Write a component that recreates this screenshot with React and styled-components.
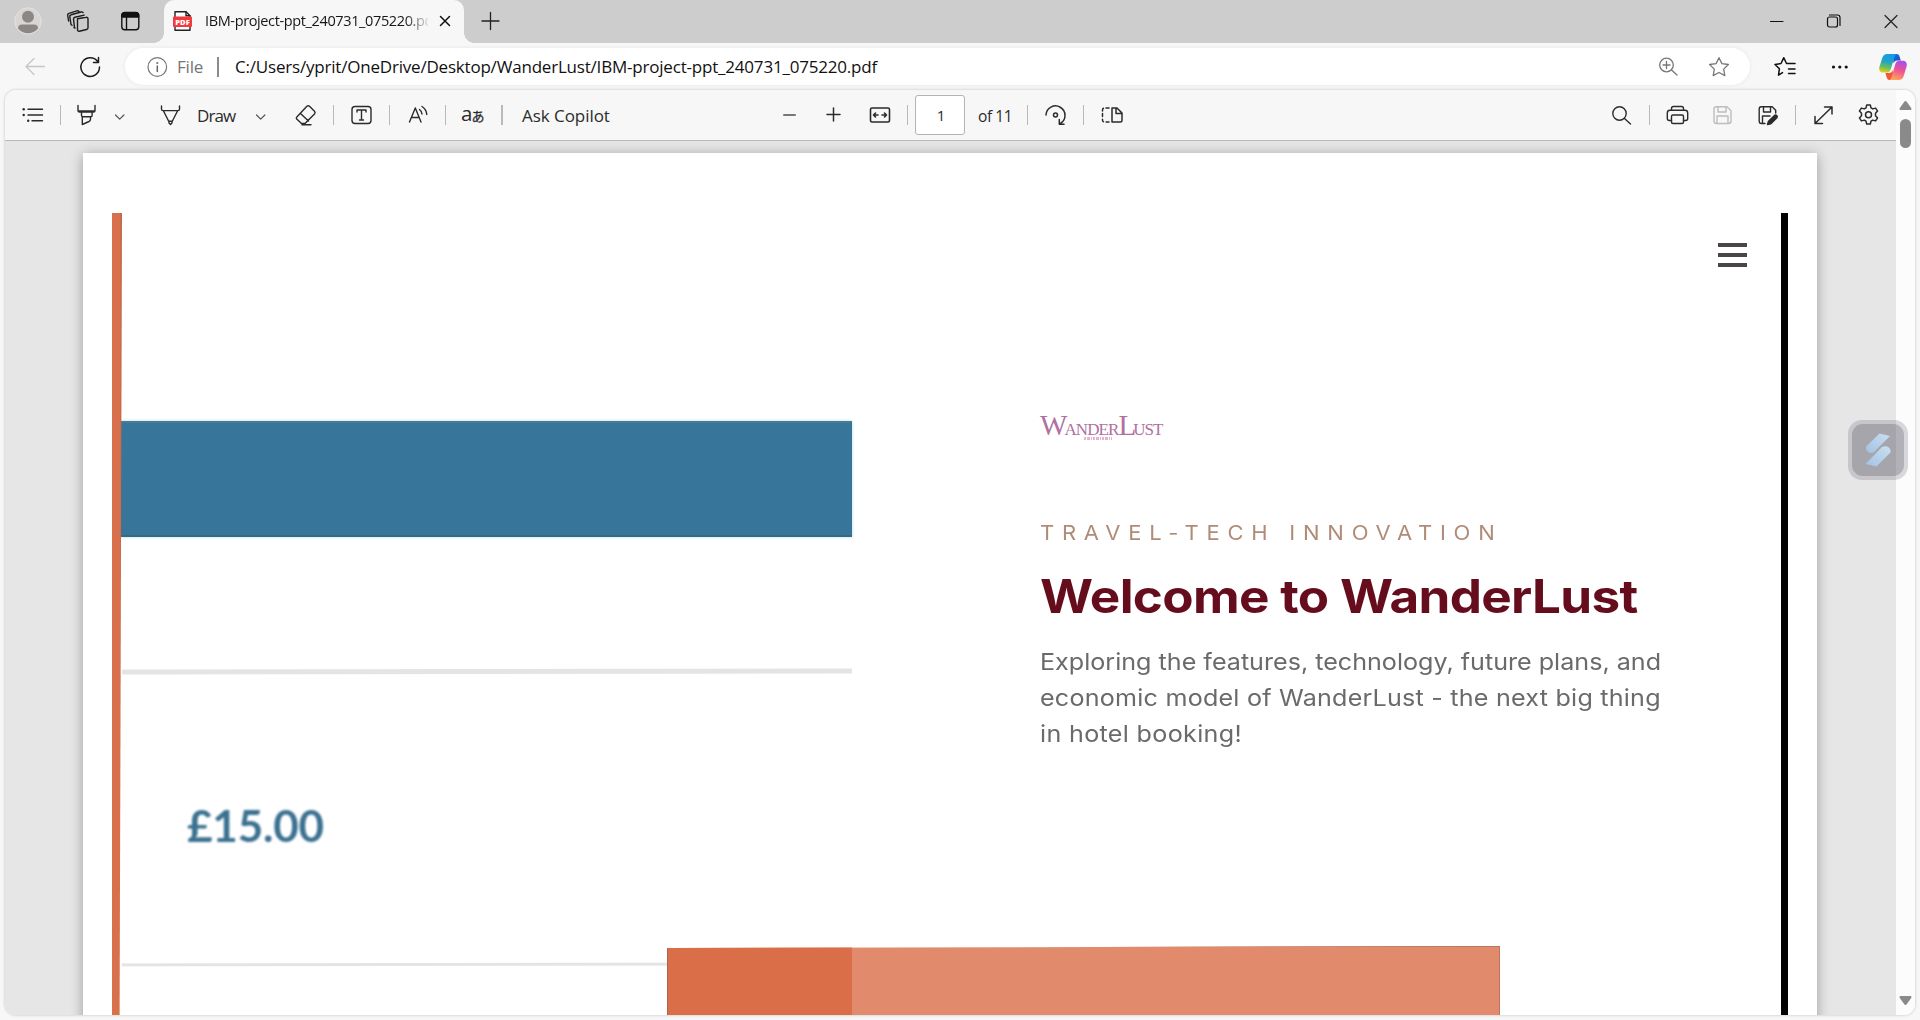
import React from "react";
import styled, { createGlobalStyle } from "styled-components";

const ui = `"Open Sans", "Noto Sans", sans-serif`;

const GlobalStyle = createGlobalStyle`
  * { box-sizing: border-box; }
  html, body { margin: 0; padding: 0; height: 100%; overflow: hidden; }
  body { background: #f7f7f7; font-family: ${ui}; color: #1b1b1b; }
`;

const Window = styled.div`
  position: relative;
  width: 1920px;
  height: 1020px;
  display: flex;
  flex-direction: column;
  background: #f7f7f7;
  overflow: hidden;
`;

/* ---------- shared pieces ---------- */
const Glyph = styled.svg`
  display: block;
  flex: none;
  margin-left: ${(p) => p.$gap || 0}px;
  width: ${(p) => p.$w || 24}px;
  height: ${(p) => p.$h || 24}px;
  fill: none;
  stroke: ${(p) => p.$color || "#2b2b2b"};
  stroke-width: ${(p) => p.$stroke || 1.4};
  stroke-linecap: round;
  stroke-linejoin: round;
  overflow: visible;
`;

function Icon({ gap, w = 24, h = 24, color, stroke, children }) {
  return (
    <Glyph $gap={gap} $w={w} $h={h} $color={color} $stroke={stroke} viewBox={`0 0 ${w} ${h}`}>
      {children}
    </Glyph>
  );
}

const Label = styled.span`
  flex: none;
  margin-left: ${(p) => p.$gap || 0}px;
  padding-top: ${(p) => p.$drop || 0}px;
  width: ${(p) => p.$w}px;
  font-size: ${(p) => p.$size || 16}px;
  letter-spacing: ${(p) => p.$track || 0}px;
  color: ${(p) => p.$color || "#2b2b2b"};
  line-height: 24px;
  white-space: nowrap;
`;

const Divider = styled.span`
  flex: none;
  width: ${(p) => p.$w || 1}px;
  height: 20px;
  margin-left: ${(p) => p.$gap}px;
  background: ${(p) => p.$color || "#b9b9b9"};
`;

/* ---------- title bar ---------- */
const TitleBar = styled.header`
  flex: none;
  height: 43px;
  padding-bottom: 2px;
  display: flex;
  align-items: center;
  background: #cdcdcd;
`;

const Tab = styled.div`
  position: relative;
  width: 300px;
  height: 43px;
  margin: 0 0 -2px 22px;
  padding: 0 0 2px 9px;
  display: flex;
  align-items: center;
  background: #f7f7f7;
  border-radius: 10px 10px 0 0;
  &::before, &::after {
    content: "";
    position: absolute;
    bottom: 0;
    width: 10px;
    height: 10px;
  }
  &::before { left: -10px; background: radial-gradient(circle at 0 0, transparent 9.5px, #f7f7f7 10px); }
  &::after { right: -10px; background: radial-gradient(circle at 100% 0, transparent 9.5px, #f7f7f7 10px); }
`;

const TabTitle = styled.span`
  width: 223px;
  margin-left: 12px;
  overflow: hidden;
  white-space: nowrap;
  font-size: 14.5px;
  line-height: 22px;
  letter-spacing: -0.37px;
  color: #161616;
  mask-image: linear-gradient(90deg, #000 200px, transparent 226px);
`;

/* ---------- address row ---------- */
const AddressRow = styled.div`
  flex: none;
  height: 47px;
  display: flex;
  align-items: center;
`;

const AddressBox = styled.div`
  width: 1625px;
  height: 37px;
  margin-left: 23px;
  display: flex;
  align-items: center;
  background: #fff;
  border-radius: 19px;
  box-shadow: 0 0 4px rgba(0, 0, 0, 0.07);
`;

/* ---------- PDF viewer ---------- */
const Viewer = styled.main`
  flex: none;
  width: 1910px;
  height: 925px;
  margin-left: 5px;
  display: flex;
  border-radius: 11px;
  overflow: hidden;
  background: #fcfcfc;
  box-shadow: 0 0 3px rgba(0, 0, 0, 0.24);
`;

const Content = styled.div`
  width: 1891px;
  display: flex;
  flex-direction: column;
`;

const PdfToolbar = styled.div`
  flex: none;
  height: 51px;
  display: flex;
  align-items: center;
  background: #f7f7f7;
  border-bottom: 1px solid #b9b9b9;
`;

const PageInput = styled.div`
  flex: none;
  width: 50px;
  height: 40px;
  margin-left: 7px;
  padding-left: 2px;
  display: flex;
  align-items: center;
  justify-content: center;
  background: #fff;
  border: 1px solid #b4b4b4;
  border-radius: 3px;
  font-size: 15px;
  color: #2b2b2b;
`;

const Canvas = styled.div`
  flex: 1;
  min-height: 0;
  padding: 12px 79px 0 78px;
  background: #e6e6e6;
  overflow: hidden;
`;

const Page = styled.div`
  height: 900px;
  padding: 60px 29px 0;
  background: #fff;
  box-shadow: 0 2px 12px rgba(0, 0, 0, 0.32);
`;

const ScrollTrack = styled.div`
  width: 19px;
  display: flex;
  flex-direction: column;
  align-items: center;
  justify-content: space-between;
  padding: 11px 0 10px;
  background: #fcfcfc;
`;

const ScrollTop = styled.div`
  display: flex;
  flex-direction: column;
  align-items: center;
  gap: 9px;
`;

const Thumb = styled.div`
  width: 11px;
  height: 29px;
  border-radius: 6px;
  background: #8a8a8a;
`;

/* ---------- slide ---------- */
const Slide = styled.section`
  position: relative;
  height: 840px;
  display: flex;
`;

const AccentBar = styled.div`
  width: 10px;
  background: linear-gradient(90deg, #d9704c 75%, #b9644c);
  clip-path: polygon(0 0, 10px 0, 7.5px 100%, 0 100%);
`;

const PriceColumn = styled.div`
  width: 730px;
  padding-top: 208px;
  display: flex;
  flex-direction: column;
`;

const BlueBand = styled.div`
  height: 116px;
  margin-left: -1px;
  background: #38759b;
  border-top: 2px solid #477b94;
  border-bottom: 2px solid #39687f;
  box-shadow: 0 0 3px #a9dce3;
`;

const Rule = styled.div`
  height: ${(p) => p.$h}px;
  width: ${(p) => p.$w}px;
  margin-top: ${(p) => p.$gap}px;
  background: #e4e4e4;
  filter: blur(0.6px);
  transform: rotate(-0.08deg);
`;

const Price = styled.div`
  height: 60px;
  margin: 121px 0 0 65px;
  font: 700 44px/60px Lato, sans-serif;
  color: #3b7190;
  white-space: nowrap;
  letter-spacing: -0.2px;
  filter: blur(0.8px);
`;

const CoralBlock = styled.div`
  position: absolute;
  left: 555px;
  top: 733px;
  width: 833px;
  height: 120px;
  display: flex;
  background: #e18b6c;
  border: 1.5px solid #b9765c;
  border-left-color: #a8664c;
  clip-path: polygon(0 2px, 100% 0, 100% 100%, 0 100%);
`;

const CoralDark = styled.div`
  width: 184px;
  background: #d96e49;
`;

const Copy = styled.div`
  flex: 1;
  padding: 192px 0 0 188px;
  display: flex;
  flex-direction: column;
  font-family: Inter, sans-serif;
`;

const Logo = styled.div`
  height: 44px;
  display: flex;
  align-items: baseline;
  font: 17px/40px "Liberation Serif", serif;
  letter-spacing: -0.9px;
  color: #b070a0;
  white-space: nowrap;
`;

const LogoCap = styled.span`
  font-size: 29px;
  letter-spacing: -3px;
`;

const LogoMark = styled.svg`
  display: block;
  margin: -13px 0 4px 44px;
  width: 28px;
  height: 5px;
`;

const Eyebrow = styled.div`
  margin-top: 74px;
  height: 28px;
  font-size: 20px;
  line-height: 28px;
  font-weight: 400;
  letter-spacing: 7.05px;
  color: #b08b78;
  white-space: nowrap;
  transform: scaleX(1.1);
  transform-origin: 0 50%;
`;

const Heading = styled.h1`
  margin: 19px 0 0;
  height: 60px;
  font-size: 46px;
  line-height: 60px;
  font-weight: 700;
  letter-spacing: -0.6px;
  color: #650d1d;
  white-space: nowrap;
  transform: scaleX(1.112);
  transform-origin: 0 50%;
`;

const Body = styled.p`
  margin: 18px 0 0;
  font-size: 23px;
  line-height: 36px;
  color: #6a6a6a;
  transform: scaleX(1.092);
  transform-origin: 0 50%;
`;

const Line = styled.span`
  display: block;
  white-space: nowrap;
  letter-spacing: ${(p) => p.$track}px;
`;

const MenuBars = styled.div`
  width: 29px;
  height: 24px;
  margin: 30px 34px 0 0;
  display: flex;
  flex-direction: column;
  justify-content: space-between;
`;

const Bar = styled.span`
  height: 4px;
  background: #4a4547;
  filter: blur(0.4px);
`;

const BlackEdge = styled.div`
  width: 7.5px;
  background: #000;
`;

const Widget = styled.div`
  position: absolute;
  left: 1848px;
  top: 420px;
  width: 60px;
  height: 60px;
  padding: 4px;
  border-radius: 14px;
  background: rgba(75, 75, 95, 0.2);
`;

const WidgetFace = styled.div`
  width: 52px;
  height: 52px;
  display: flex;
  align-items: center;
  justify-content: center;
  border-radius: 11px;
  background: rgba(75, 75, 85, 0.27);
`;

const starPath = "M12 2.7l2.9 5.9 6.5.9-4.7 4.6 1.1 6.5-5.8-3.1-5.8 3.1 1.1-6.5L2.6 9.5l6.5-.9z";

function PdfFavicon() {
  return (
    <Icon w={20} h={22} color="#222" stroke="1.4">
      <path d="M2 8V1.7h11l4 4V8M2 16v4.3h15V16" fill="#fff" />
      <path d="M13 1.7v4h4" />
      <rect x="0" y="6.5" width="19" height="10.5" rx="1" fill="#f4383d" stroke="none" />
      <text x="9.5" y="14.6" textAnchor="middle" fontFamily="Open Sans, sans-serif" fontSize="7.6" fontWeight="800" fill="#fff" stroke="none">PDF</text>
    </Icon>
  );
}

function Copilot() {
  return (
    <Icon gap={27} w={28} h={28} stroke="0">
      <defs>
        <linearGradient id="cpA" x1="0.4" y1="0" x2="0.2" y2="1">
          <stop offset="0" stopColor="#1599ea" /><stop offset=".4" stopColor="#22a5c0" />
          <stop offset=".7" stopColor="#6cbf5a" /><stop offset="1" stopColor="#f4cf13" />
        </linearGradient>
        <linearGradient id="cpB" x1="0.7" y1="0" x2="0.4" y2="1">
          <stop offset="0" stopColor="#a94df0" /><stop offset=".5" stopColor="#ee5591" />
          <stop offset="1" stopColor="#ffa45c" />
        </linearGradient>
        <linearGradient id="cpC" x1="0" y1="0" x2="1" y2="1">
          <stop offset="0" stopColor="#1a72e4" /><stop offset="1" stopColor="#2146bd" />
        </linearGradient>
      </defs>
      <path d="M13 1h4.5c1.6 0 2.5.8 3 2.4l1.3 4.2h-3.500c-2.200 0-3 1-3.600 3z" fill="url(#cpC)" />
      <path d="M15 27h-4.600c-1.400 0-2.200-.8-2.700-2.400L6.400 20H10c2 0 2.900-1 3.500-3z" fill="#ef5a36" />
      <path d="M8.400 1H18c-1.400.3-2 1.300-2.500 2.800L11.800 16c-.9 2.600-2 3.600-4.600 3.600H4.100C1 19.600-.4 17 .4 14L3.300 5C4.200 2.300 5.600 1 8.400 1z" fill="url(#cpA)" />
      <path d="M19.600 27H10c1.400-.3 2-1.300 2.500-2.800l3.700-12.800c.9-2.600 2-3.600 4.600-3.600h3.100c3.100 0 4.500 2.600 3.700 5.600L24.700 23c-.9 2.700-2.300 4-5.100 4z" fill="url(#cpB)" />
    </Icon>
  );
}

function Chevron({ gap }) {
  return <Icon gap={gap} w={12} h={24} color="#555" stroke="1.2"><path d="M1.500 12l4.200 4.200 4.200-4.200" /></Icon>;
}

export default function App() {
  return (
    <Window>
      <GlobalStyle />
      <TitleBar>
        <Icon gap={14} w={28} h={28} stroke="0">
          <circle cx="14" cy="14" r="13.2" fill="#d8d6d3" stroke="#e4e2df" strokeWidth="1" />
          <circle cx="14" cy="9.8" r="6" fill="#8b8784" />
          <path d="M4 21.500c0-3 1.500-4 4-4h12c2.500 0 4 1 4 4a13 13 0 0 1-20 0z" fill="#8b8784" />
        </Icon>
        <Icon gap={24} color="#1d1d1d">
          <path d="M11.500 9.800l8.500-1.500c1-.2 2 .4 2 1.500v9c0 .9-.5 1.500-1.400 1.700l-7.300 1.700c-1 .2-1.800-.4-1.800-1.400z" />
          <path d="M8.500 18.500l-1-8.300c-.1-1 .5-1.700 1.400-1.900l9.300-2.200M8 18.500l1 .5M5 15.500L3.800 7.700c-.2-1 .4-1.800 1.300-2l10-2.700c.9-.2 1.600 0 2 .6M5 15.500l1 .8M2.600 12L1.700 6.300c-.2-1 .3-1.700 1.200-2L11 1.900c.8-.2 1.600 0 2 .7" />
        </Icon>
        <Icon gap={28} color="#111">
          <rect x="3.800" y="3.700" width="17" height="17" rx="3" />
          <path d="M4 8V6.500a3 3 0 0 1 3-3h10.600a3 3 0 0 1 3 3V8z" fill="#111" />
          <path d="M8.500 8v12.500" />
        </Icon>
        <Tab>
          <PdfFavicon />
          <TabTitle>IBM-project-ppt_240731_075220.pdf</TabTitle>
          <Icon gap={10} w={14} h={14} color="#111" stroke="1.5"><path d="M2.500 2.500l9 9M11.500 2.500l-9 9" /></Icon>
        </Tab>
        <Icon gap={14} color="#222" stroke="1.3"><path d="M12.500 3.500v17M4 12h17" /></Icon>
        <Icon gap={1263} color="#111" stroke="1.1"><path d="M5.500 12.500h12.500" /></Icon>
        <Icon gap={32} color="#111" stroke="1.2">
          <rect x="6.500" y="8" width="10" height="10" rx="2" />
          <path d="M8.500 6h8c1.500 0 2.500 1 2.500 2.500v8" />
        </Icon>
        <Icon gap={34} color="#222" stroke="1.2"><path d="M6 6.500l12 12M18 6.500l-12 12" /></Icon>
      </TitleBar>

      <AddressRow>
        <Icon gap={23} color="#c6c6c6" stroke="1.3"><path d="M21.500 11.500H3M11 3.500l-8 8 8 8" /></Icon>
        <Icon gap={31} color="#1d1d1d" stroke="1.5">
          <path d="M19.700 6.600A9.300 9.300 0 1 0 21.500 12M20.500 2.500v5h-5" />
        </Icon>
        <AddressBox>
          <Icon gap={20} color="#767676" stroke="1.2">
            <circle cx="12.300" cy="12" r="9.300" />
            <path d="M12.300 11v5.500" stroke="#666" strokeWidth="1.5" />
            <circle cx="12.300" cy="8" r=".5" fill="#666" />
          </Icon>
          <Label $gap={8} $w={40} $size={17} $track={-0.2} $color="#757575">File</Label>
          <Divider $gap={0} $w={2} $color="#8b8b8b" />
          <Label $gap={16} $w={660} $size={17} $track={-0.2} $color="#111">C:/Users/yprit/OneDrive/Desktop/WanderLust/IBM-project-ppt_240731_075220.pdf</Label>
          <Icon gap={762} color="#777" stroke="1.3">
            <circle cx="9.500" cy="10" r="6.800" /><path d="M14.500 15l5.500 5M9.500 6.500v7M6 10h7" />
          </Icon>
          <Icon gap={26} color="#777" stroke="1.3"><path d={starPath} /></Icon>
        </AddressBox>
        <Icon gap={23} color="#111" stroke="1.5">
          <path d="M9.500 17.600l-4 2.600.9-6.500L2 9.500l6-1 2.800-5.800 2.700 5.800H22M15.500 14H22M15.500 18.500H22" />
        </Icon>
        <Icon gap={31} stroke="0" color="none">
          <g fill="#111"><circle cx="5.500" cy="12" r="1.600" /><circle cx="11.800" cy="12" r="1.600" /><circle cx="18.200" cy="12" r="1.600" /></g>
        </Icon>
        <Copilot />
      </AddressRow>

      <Viewer>
        <Content>
          <PdfToolbar>
            <Icon gap={15}>
              <path d="M8 6.200h14.500M8 12h14.500M12 17.700h10.500" />
              <g fill="#2b2b2b" stroke="none"><circle cx="3.700" cy="6.200" r="1.200" /><circle cx="3.700" cy="12" r="1.200" /><circle cx="8.200" cy="17.700" r="1.200" /></g>
            </Icon>
            <Divider $gap={16} />
            <Icon gap={14}>
              <path d="M3 2.500v5c0 1 .5 1.500 1.500 1.500h14c1 0 1.500-.5 1.500-1.500v-5M3 8h17M6.500 9v3.500c0 .8.500 1.300 1.300 1.300h8c.8 0 1.300-.5 1.300-1.300V9M7.300 14v7.500l6.700-3c1-.5 1.500-1.200 1.500-2.200V14" />
            </Icon>
            <Chevron gap={15} />
            <Icon gap={33}>
              <path d="M2.500 3v3c0 1 .5 1.600 1.500 1.600h15c1 0 1.500-.6 1.500-1.600V3M4.500 8l5.200 10.300h3.600L18.500 8M10 18.500V20l1.500 1.500L13 20v-1.500" />
            </Icon>
            <Label $gap={14} $w={40} $size={17} $track={-0.9} $drop={2}>Draw</Label>
            <Chevron gap={18} />
            <Icon gap={27}>
              <path d="M2.800 14L12.900 3.300c.8-.8 1.800-.8 2.600 0l5 5c.8.800.8 1.800 0 2.600L11 20.500H7.500L2.700 16c-.6-.7-.5-1.400.1-2zM6.500 10.500l8 7.500M8 21.700h9" />
            </Icon>
            <Divider $gap={15} />
            <Icon gap={16}>
              <rect x="2" y="3.500" width="19" height="17" rx="3" />
              <path d="M7 9V7h9v2M11.500 7v10M9.500 17h4" />
            </Icon>
            <Divider $gap={15} />
            <Icon gap={17}>
              <path d="M2.500 19L8.300 5l5.700 14M4.500 14.500h7.600M12.500 6.500c1.500 1 2.300 2.500 2.500 4.500M15 3.500c2.800 1.800 4.500 4.500 4.800 8" />
            </Icon>
            <Divider $gap={14} />
            <Icon gap={15} stroke="0">
              <text x="0" y="17.500" fontFamily="Open Sans, sans-serif" fontSize="20.500" fill="#2b2b2b" stroke="none">a</text>
              <text x="10.500" y="18" fontFamily="Noto Sans CJK JP, sans-serif" fontSize="13" fontWeight="400" fill="#2b2b2b" stroke="#2b2b2b" strokeWidth=".3">あ</text>
            </Icon>
            <Divider $gap={16} $w={2} />
            <Label $gap={19} $w={89} $size={17} $track={-0.05} $drop={2}>Ask Copilot</Label>
            <Icon gap={167} color="#777" stroke="2"><path d="M6 12h11" /></Icon>
            <Icon gap={19} stroke="1.5"><path d="M12.500 5v13M6 11.500h13" /></Icon>
            <Icon gap={23} stroke="1.6">
              <rect x="2.500" y="5" width="19" height="14" rx="1.500" />
              <path d="M5.500 12H10M7.500 10l-2 2 2 2M18.500 12H14M16.500 10l2 2-2 2" />
            </Icon>
            <Divider $gap={15} />
            <PageInput>1</PageInput>
            <Label $gap={13} $w={34} $size={15.5} $track={-0.4} $drop={1}>of 11</Label>
            <Divider $gap={15} />
            <Icon gap={16} stroke="1.5">
              <path d="M2 12a9.500 9.500 0 1 1 14.500 8.500M15.300 16.500v4.700H20" /><circle cx="11.500" cy="12" r="2" />
            </Icon>
            <Divider $gap={15} />
            <Icon gap={16} stroke="1.5">
              <path d="M12 5h5l5 5v7.500c0 1-.5 1.500-1.500 1.500H12zM16 5v5.500h6" />
              <path d="M9 5H4.500c-1 0-2 .5-2 2v10c0 1.500 1 2 2 2H9" strokeDasharray="3 2.600" />
            </Icon>
            <Icon gap={485}><circle cx="10.500" cy="10.500" r="6.700" /><path d="M15.500 15.500l6 5.500" /></Icon>
            <Divider $gap={16} />
            <Icon gap={15}>
              <path d="M6.500 7V5.500c0-1.200.7-2 2-2h8c1.300 0 2 .8 2 2V7M6.500 17.500H4.500c-1.500 0-2.200-.8-2.200-2V10c0-1.700 1-2.700 2.700-2.700h15c1.700 0 2.700 1 2.700 2.700v5.500c0 1.200-.7 2-2.200 2h-2" />
              <rect x="6.500" y="12" width="12" height="8.500" rx="1.500" />
            </Icon>
            <Icon gap={21} color="#bdbdbd">
              <path d="M6 3.700h11l4 4V18c0 1.500-1 2.500-2.500 2.500h-12c-1.500 0-2.500-1-2.500-2.500V6c0-1.400.8-2.300 2-2.300zM8 4v5h8V4M7 20v-7h11v7" />
            </Icon>
            <Icon gap={22}>
              <path d="M9 20.500H5.500c-1.400 0-2.300-1-2.300-2.300V6c0-1.400.8-2.300 2-2.300h11l3.500 3.500V10M7.500 4v5h7V4M6.500 20v-7H14" />
              <path d="M11.500 21.500l1-3.300 6-5.800c1.500-1.200 3.700.8 2.400 2.400l-6 5.900z" fill="#2b2b2b" />
            </Icon>
            <Divider $gap={15} />
            <Icon gap={15} stroke="1.5"><path d="M4 20.500L21 4M13.500 4H21v7M4 13.500v7h7.500" /></Icon>
            <Icon gap={21} stroke="1.5">
              <circle cx="12.500" cy="11.700" r="3" />
              <path d="M10.700 2h3.600l.7 2.900 1.700 1 2.900-.8 2 3-2.100 2.200v2.400l2.100 2.200-2 3-2.900-.8-1.700 1-.7 3h-3.600l-.7-3-1.700-1-2.900.8-2-3 2.100-2.200v-2.400L3.400 8.100l2-3 2.900.8 1.700-1z" />
            </Icon>
          </PdfToolbar>

          <Canvas>
            <Page>
              <Slide>
                <AccentBar />
                <PriceColumn>
                  <BlueBand />
                  <Rule $gap={132} $h={5} $w={730} />
                  <Price>£15.00</Price>
                  <Rule $gap={108} $h={3} $w={545} />
                </PriceColumn>
                <Copy>
                  <Logo>
                    <LogoCap>W</LogoCap>ANDER<LogoCap>L</LogoCap>UST
                  </Logo>
                  <LogoMark viewBox="0 0 28 5">
                    <path d="M0 2.500h28" stroke="#e3b5cb" strokeWidth="3" strokeDasharray="2 1 3 1 1 1" />
                  </LogoMark>
                  <Eyebrow>TRAVEL-TECH INNOVATION</Eyebrow>
                  <Heading>Welcome to WanderLust</Heading>
                  <Body>
                    <Line $track={0}>Exploring the features, technology, future plans, and</Line>
                    <Line $track={0.2}>economic model of WanderLust - the next big thing</Line>
                    <Line $track={0.3}>in hotel booking!</Line>
                  </Body>
                </Copy>
                <MenuBars><Bar /><Bar /><Bar /></MenuBars>
                <BlackEdge />
                <CoralBlock><CoralDark /></CoralBlock>
              </Slide>
            </Page>
          </Canvas>
        </Content>
        <ScrollTrack>
          <ScrollTop>
            <Icon w={13} h={9} stroke="0"><path d="M6.500 0c.6 0 1 .3 1.400.9l4.300 6.200c.7 1 .3 1.900-.9 1.900H1.700C.5 9 .1 8.100.8 7.100L5.100.9C5.500.3 5.900 0 6.500 0z" fill="#8a8a8a" /></Icon>
            <Thumb />
          </ScrollTop>
          <Icon w={13} h={9} stroke="0"><path d="M6.500 9c-.6 0-1-.3-1.400-.9L.8 1.900C.1.900.5 0 1.700 0h9.600c1.200 0 1.600.9.9 1.900L7.900 8.100c-.4.600-.8.900-1.400.9z" fill="#8a8a8a" /></Icon>
        </ScrollTrack>
      </Viewer>

      <Widget>
        <WidgetFace>
          <Icon w={26} h={34} stroke="0">
            <defs>
              <linearGradient id="wg" x1="1" y1="0" x2="0" y2="1">
                <stop offset="0" stopColor="#cbdff0" /><stop offset="1" stopColor="#a2c2e4" />
              </linearGradient>
            </defs>
            <path d="M14.500.5L25 3 8.500 19.500C4 21 .5 18 1 13.500z" fill="url(#wg)" />
            <path d="M11.500 33.500L.5 31l16.500-17c5-2 9 .5 8.500 5.500z" fill="url(#wg)" />
          </Icon>
        </WidgetFace>
      </Widget>
    </Window>
  );
}
